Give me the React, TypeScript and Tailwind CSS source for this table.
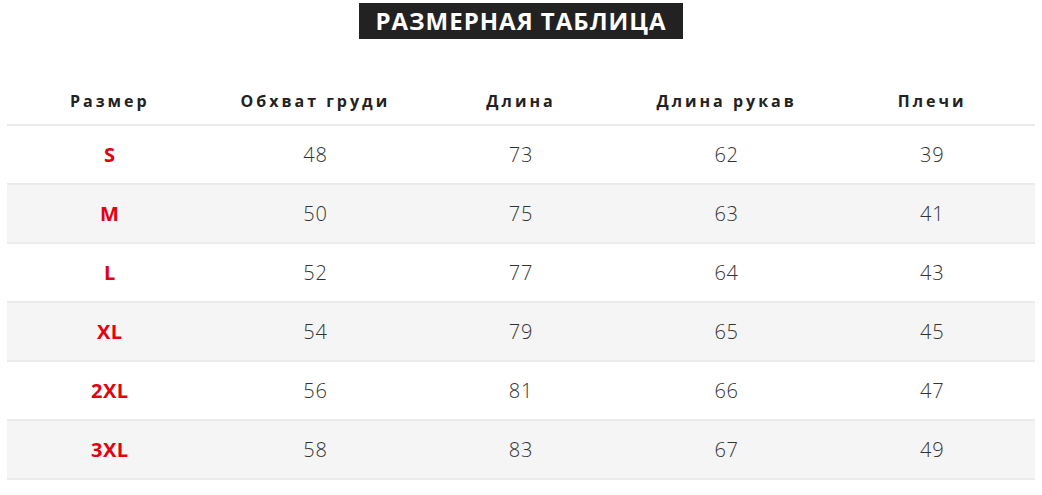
const headers = ["Размер", "Обхват груди", "Длина", "Длина рукав", "Плечи"];

const rows = [
  ["S", "48", "73", "62", "39"],
  ["M", "50", "75", "63", "41"],
  ["L", "52", "77", "64", "43"],
  ["XL", "54", "79", "65", "45"],
  ["2XL", "56", "81", "66", "47"],
  ["3XL", "58", "83", "67", "49"],
];

export default function App() {
  return (
    <div className="min-h-[495px] bg-white font-['Open_Sans',sans-serif]">
      <div className="flex justify-center pt-[3px]">
        <h2 className="flex h-[36px] items-center bg-[#222222] px-[16px] text-[24px] font-bold uppercase tracking-[1px] text-white">
          Размерная таблица
        </h2>
      </div>

      <div className="mx-[7px] mt-[39px] border-b-[2px] border-[#ebebeb]">
        <div className="grid h-[46px] grid-cols-5 items-center">
          {headers.map((h) => (
            <div
              key={h}
              className="text-center text-[16px] font-bold tracking-[3px] text-[#222222]"
            >
              {h}
            </div>
          ))}
        </div>

        {rows.map((r, i) => (
          <div
            key={r[0]}
            className={`grid h-[59px] grid-cols-5 items-center border-t-[2px] border-[#ebebeb] ${
              i % 2 === 1 ? "bg-[#f5f5f5]" : "bg-white"
            }`}
          >
            {r.map((c, j) => (
              <div
                key={j}
                className={
                  j === 0
                    ? "text-center text-[20px] font-bold tracking-[0.5px] text-[#e3000f]"
                    : "text-center text-[20px] font-light tracking-[0.8px] text-[#333333]"
                }
              >
                {c}
              </div>
            ))}
          </div>
        ))}
      </div>
    </div>
  );
}
